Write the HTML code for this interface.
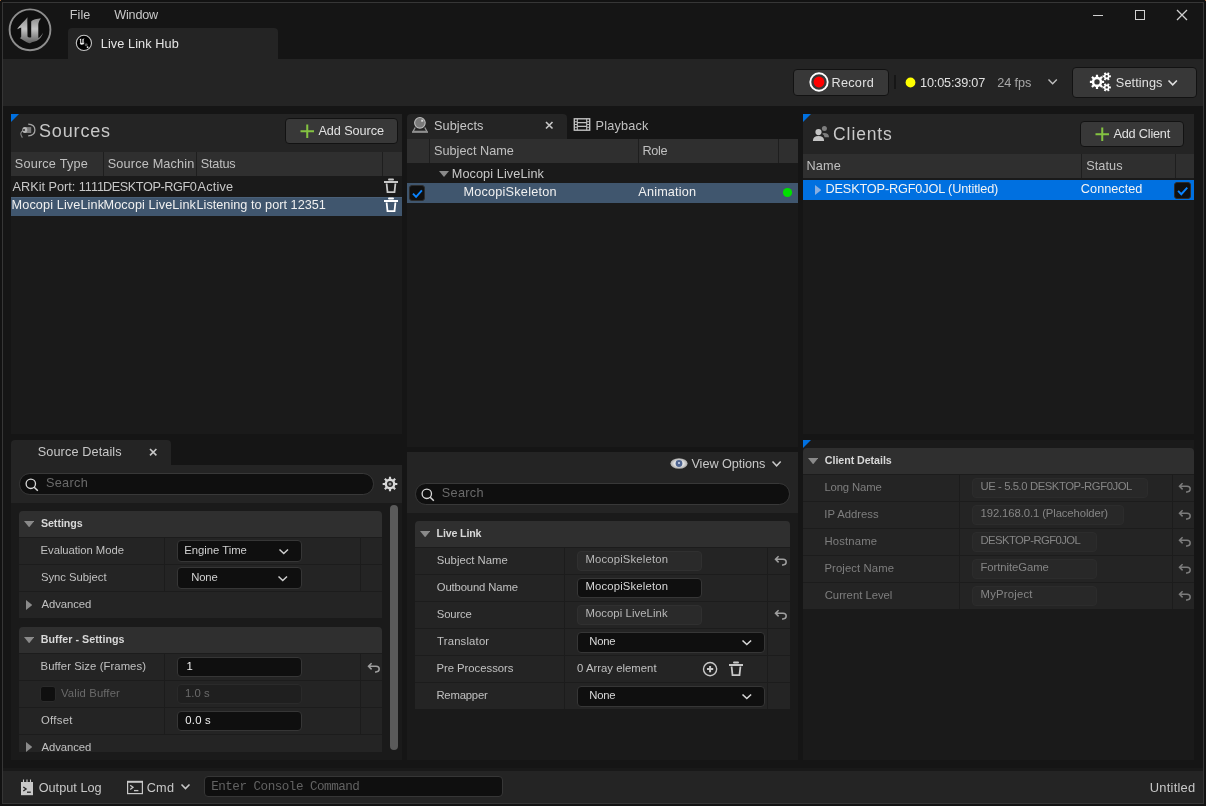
<!DOCTYPE html>
<html><head><meta charset="utf-8"><style>
html,body{margin:0;padding:0;width:1206px;height:806px;overflow:hidden;background:#0c0c0c;}
.a{position:absolute;}
.t{position:absolute;white-space:nowrap;font-family:"Liberation Sans",sans-serif;}
</style></head><body><div class="a" style="left:0;top:0;width:1206px;height:806px;overflow:hidden;will-change:transform;background:#0c0c0c">
<div class="a" style="left:0px;top:0px;width:1206px;height:806px;background:#121212;"></div>
<div class="a" style="left:2px;top:2px;width:1202px;height:802px;background:#363636;"></div>
<div class="a" style="left:0px;top:0px;width:1px;height:1px;background:#a0683c;"></div>
<div class="a" style="left:1205px;top:0px;width:1px;height:1px;background:#a0683c;"></div>
<div class="a" style="left:3px;top:3px;width:1200px;height:800px;background:#151515;"></div>
<svg class="a" style="left:8px;top:8.2px;" width="44" height="44" viewBox="0 0 44 44"><defs><linearGradient id="lg" x1="0" y1="0" x2="0" y2="1"><stop offset="0" stop-color="#8a8a8a"/><stop offset="0.45" stop-color="#c4c4c4"/><stop offset="1" stop-color="#5e5e5e"/></linearGradient></defs><circle cx="22" cy="21.8" r="20.4" fill="#0f0f0f" stroke="#8e8e8e" stroke-width="1.9"/><path d="M9.2 21.3 C11 18 15 14.5 19.5 9.2 L19.3 12.5 L19.5 28.5 Q20.5 30 23.2 29.2 L23.2 13.5 C24.5 11.5 29 10.5 33.1 10.5 C31 12.5 30.3 15 30.3 17 L30.3 30 C31.5 29.5 33.5 27.5 35 24.7 C33.5 29.5 30.5 33 25.7 33.7 L24.5 34 C23 35 22 35.3 21.3 35.3 C18 34 14 31.5 11.7 30 C13 29.8 13.2 29 13.2 28 L13.2 19.5 C12 20 10.5 20.5 9.2 21.3 Z" fill="url(#lg)"/></svg>
<div class="t" style="left:69.79px;top:9.13px;font-size:12.6px;line-height:12.6px;color:#c8c8c8;font-family:'Liberation Sans',sans-serif;letter-spacing:0.075px;">File</div>
<div class="t" style="left:114.34px;top:9.13px;font-size:12.6px;line-height:12.6px;color:#c8c8c8;font-family:'Liberation Sans',sans-serif;letter-spacing:-0.199px;">Window</div>
<div class="a" style="left:68px;top:28px;width:210px;height:31px;background:#242424;border-radius:4px 4px 0 0;"></div>
<svg class="a" style="left:75px;top:34px;" width="18" height="18" viewBox="0 0 18 18"><circle cx="8.9" cy="8.9" r="7.6" fill="#000" stroke="#c4c4c4" stroke-width="1.1"/><path d="M4.5 5.2 L6.2 4.6 L6.2 8.6 Q6.6 9.2 7.4 8.9 L7.4 5 L9.6 4.4 L8.6 5.6 L8.6 9.2 L9.8 8.4 Q9 10.6 6.6 10.8 Q5.2 10.4 4.6 9.8 L5.2 9.4 L5.2 6.2 Z" fill="#f0f0f0"/><circle cx="11.2" cy="10.8" r="1.5" fill="#555"/><circle cx="12.6" cy="13.2" r="0.9" fill="#e0e0e0"/></svg>
<div class="t" style="left:100.78px;top:38.15px;font-size:12.7px;line-height:12.7px;color:#e6e6e6;font-family:'Liberation Sans',sans-serif;letter-spacing:0.089px;">Live Link Hub</div>
<div class="a" style="left:1093px;top:15px;width:10px;height:1.4px;background:#d0d0d0;"></div>
<div class="a" style="left:1135px;top:10px;width:10px;height:10px;border:1.4px solid #d0d0d0;box-sizing:border-box;"></div>
<svg class="a" style="left:1176px;top:8.5px;" width="12" height="12" viewBox="0 0 12 12"><path d="M1 1 L11 11 M11 1 L1 11" stroke="#d0d0d0" stroke-width="1.3"/></svg>
<div class="a" style="left:3px;top:59px;width:1200px;height:47px;background:#242424;"></div>
<div class="a" style="left:793px;top:69px;width:96px;height:27px;background:#383838;border:1px solid #121212;box-sizing:border-box;border-radius:4px;"></div>
<svg class="a" style="left:808px;top:71px;" width="22" height="22" viewBox="0 0 22 22"><circle cx="11" cy="11" r="8.7" fill="none" stroke="#fff" stroke-width="1.9"/><circle cx="11" cy="11" r="5.4" fill="#ff0000"/></svg>
<div class="t" style="left:831.48px;top:76.75px;font-size:12.7px;line-height:12.7px;color:#e0e0e0;font-family:'Liberation Sans',sans-serif;letter-spacing:0.264px;">Record</div>
<div class="a" style="left:894px;top:75px;width:2px;height:14px;background:#161616;"></div>
<svg class="a" style="left:904px;top:76px;" width="13" height="13" viewBox="0 0 13 13"><circle cx="6.5" cy="6.5" r="4.9" fill="#ffff00"/></svg>
<div class="t" style="left:920.05px;top:76.75px;font-size:12.7px;line-height:12.7px;color:#e0e0e0;font-family:'Liberation Sans',sans-serif;letter-spacing:-0.177px;">10:05:39:07</div>
<div class="t" style="left:997.16px;top:76.75px;font-size:12.7px;line-height:12.7px;color:#a8a8a8;font-family:'Liberation Sans',sans-serif;letter-spacing:-0.066px;">24 fps</div>
<svg class="a" style="left:1046.5px;top:77.9px;" width="11.3" height="7.3" viewBox="0 0 11.3 7.3"><path d="M1.5 1.5 L5.65 5.80 L9.80 1.5" fill="none" stroke="#c0c0c0" stroke-width="1.4"/></svg>
<div class="a" style="left:1072px;top:67px;width:125px;height:31px;background:#383838;border:1px solid #121212;box-sizing:border-box;border-radius:4px;"></div>
<svg class="a" style="left:1085px;top:68px;" width="30" height="28" viewBox="0 0 30 28"><path fill-rule="evenodd" fill="#fff" d="M16.80 11.91 L17.08 12.79 L19.12 12.80 L19.12 15.00 L17.08 15.01 L16.80 15.89 L16.38 16.70 L17.81 18.15 L16.25 19.71 L14.80 18.28 L13.99 18.70 L13.11 18.98 L13.10 21.02 L10.90 21.02 L10.89 18.98 L10.01 18.70 L9.20 18.28 L7.75 19.71 L6.19 18.15 L7.62 16.70 L7.20 15.89 L6.92 15.01 L4.88 15.00 L4.88 12.80 L6.92 12.79 L7.20 11.91 L7.62 11.10 L6.19 9.65 L7.75 8.09 L9.20 9.52 L10.01 9.10 L10.89 8.82 L10.90 6.78 L13.10 6.78 L13.11 8.82 L13.99 9.10 L14.80 9.52 L16.25 8.09 L17.81 9.65 L16.38 11.10 Z M9.30 13.90 a2.70 2.70 0 1 0 5.40 0 a2.70 2.70 0 1 0 -5.40 0 Z M24.21 6.85 L24.46 7.40 L25.89 7.32 L25.89 9.28 L24.46 9.20 L24.21 9.75 L23.86 10.24 L24.64 11.43 L22.94 12.42 L22.30 11.14 L21.70 11.20 L21.10 11.14 L20.46 12.42 L18.76 11.43 L19.54 10.24 L19.19 9.75 L18.94 9.20 L17.51 9.28 L17.51 7.32 L18.94 7.40 L19.19 6.85 L19.54 6.36 L18.76 5.17 L20.46 4.18 L21.10 5.46 L21.70 5.40 L22.30 5.46 L22.94 4.18 L24.64 5.17 L23.86 6.36 Z M20.50 8.30 a1.20 1.20 0 1 0 2.40 0 a1.20 1.20 0 1 0 -2.40 0 Z M24.21 17.95 L24.46 18.50 L25.89 18.42 L25.89 20.38 L24.46 20.30 L24.21 20.85 L23.86 21.34 L24.64 22.53 L22.94 23.52 L22.30 22.24 L21.70 22.30 L21.10 22.24 L20.46 23.52 L18.76 22.53 L19.54 21.34 L19.19 20.85 L18.94 20.30 L17.51 20.38 L17.51 18.42 L18.94 18.50 L19.19 17.95 L19.54 17.46 L18.76 16.27 L20.46 15.28 L21.10 16.56 L21.70 16.50 L22.30 16.56 L22.94 15.28 L24.64 16.27 L23.86 17.46 Z M20.50 19.40 a1.20 1.20 0 1 0 2.40 0 a1.20 1.20 0 1 0 -2.40 0 Z"/></svg>
<div class="t" style="left:1115.83px;top:76.95px;font-size:12.7px;line-height:12.7px;color:#e0e0e0;font-family:'Liberation Sans',sans-serif;letter-spacing:0.101px;">Settings</div>
<svg class="a" style="left:1167.3px;top:79px;" width="11.4" height="7.3" viewBox="0 0 11.4 7.3"><path d="M1.5 1.5 L5.70 5.80 L9.90 1.5" fill="none" stroke="#e0e0e0" stroke-width="1.6"/></svg>
<div class="a" style="left:11px;top:114px;width:391px;height:38px;background:#242424;"></div>
<svg class="a" style="left:11px;top:114px;" width="8" height="8" viewBox="0 0 8 8"><path d="M0 0 H8 L0 8 Z" fill="#0070e0"/></svg>
<svg class="a" style="left:18px;top:122px;" width="19" height="18" viewBox="0 0 19 18"><path d="M5.6 8.6 Q0.6 10.4 4.4 15.6" fill="none" stroke="#8a8a8a" stroke-width="1.1"/><rect x="6.6" y="5.1" width="6.6" height="5.9" fill="#7c7c7c"/><ellipse cx="6.8" cy="8" rx="2.5" ry="2.95" fill="#b4b4b4"/><path d="M10.2 2.2 Q16.9 2.6 16.9 8 Q16.9 13.4 10.2 13.8" fill="none" stroke="#a4a4a4" stroke-width="1.3"/><circle cx="6" cy="8" r="0.95" fill="#202020"/></svg>
<div class="t" style="left:38.99px;top:122.06px;font-size:18px;line-height:18px;color:#c8c8c8;font-family:'Liberation Sans',sans-serif;letter-spacing:0.847px;">Sources</div>
<div class="a" style="left:285px;top:118px;width:113px;height:26px;background:#383838;border:1px solid #121212;box-sizing:border-box;border-radius:4px;"></div>
<svg class="a" style="left:300px;top:124px;" width="14.5" height="14.5" viewBox="0 0 14.5 14.5"><path d="M7.25 0.5 V14.00 M0.5 7.25 H14.00" stroke="#84c341" stroke-width="2"/></svg>
<div class="t" style="left:318.40px;top:124.95px;font-size:12.7px;line-height:12.7px;color:#e0e0e0;font-family:'Liberation Sans',sans-serif;letter-spacing:-0.072px;">Add Source</div>
<div class="a" style="left:11px;top:152px;width:391px;height:24px;background:#2f2f2f;"></div>
<div class="a" style="left:103px;top:152px;width:1px;height:24px;background:#1e1e1e;"></div>
<div class="a" style="left:196px;top:152px;width:1px;height:24px;background:#1e1e1e;"></div>
<div class="a" style="left:382px;top:152px;width:1px;height:24px;background:#1e1e1e;"></div>
<div class="t" style="left:14.73px;top:157.75px;font-size:12.7px;line-height:12.7px;color:#c0c0c0;font-family:'Liberation Sans',sans-serif;letter-spacing:0.202px;">Source Type</div>
<div class="t" style="left:107.73px;top:157.75px;font-size:12.7px;line-height:12.7px;color:#c0c0c0;font-family:'Liberation Sans',sans-serif;letter-spacing:0.169px;">Source Machin</div>
<div class="t" style="left:200.73px;top:157.75px;font-size:12.7px;line-height:12.7px;color:#c0c0c0;font-family:'Liberation Sans',sans-serif;letter-spacing:-0.198px;">Status</div>
<div class="a" style="left:11px;top:176px;width:391px;height:258px;background:#1a1a1a;"></div>
<div class="t" style="left:12.60px;top:181.05px;font-size:12.7px;line-height:12.7px;color:#c8c8c8;font-family:'Liberation Sans',sans-serif;letter-spacing:-0.012px;">ARKit Port: 1111</div>
<div class="t" style="left:102.98px;top:181.05px;font-size:12.7px;line-height:12.7px;color:#c8c8c8;font-family:'Liberation Sans',sans-serif;letter-spacing:-0.417px;">DESKTOP-RGF0</div>
<div class="t" style="left:197.50px;top:181.05px;font-size:12.7px;line-height:12.7px;color:#c8c8c8;font-family:'Liberation Sans',sans-serif;letter-spacing:0.193px;">Active</div>
<svg class="a" style="left:384px;top:178px;" width="15" height="16" viewBox="0 0 15 16"><rect x="4" y="0.4" width="6" height="2.1" rx="1" fill="#c8c8c8"/><rect x="0" y="3" width="14" height="2" fill="#c8c8c8"/><path d="M2.6 5.5 L3.5 14.1 H10.5 L11.4 5.5" fill="none" stroke="#c8c8c8" stroke-width="1.8"/></svg>
<div class="a" style="left:11px;top:197px;width:391px;height:19px;background:#40566e;"></div>
<div class="a" style="left:11px;top:197px;width:391px;height:1px;background:#4a6078;"></div>
<div class="t" style="left:11.58px;top:199.45px;font-size:12.7px;line-height:12.7px;color:#f0f0f0;font-family:'Liberation Sans',sans-serif;letter-spacing:0.104px;">Mocopi LiveLink</div>
<div class="t" style="left:103.48px;top:199.45px;font-size:12.7px;line-height:12.7px;color:#f0f0f0;font-family:'Liberation Sans',sans-serif;letter-spacing:0.104px;">Mocopi LiveLink</div>
<div class="t" style="left:196.48px;top:199.45px;font-size:12.7px;line-height:12.7px;color:#f0f0f0;font-family:'Liberation Sans',sans-serif;letter-spacing:0.017px;">Listening to port 12351</div>
<svg class="a" style="left:384px;top:197px;" width="15" height="16" viewBox="0 0 15 16"><rect x="4" y="0.4" width="6" height="2.1" rx="1" fill="#ffffff"/><rect x="0" y="3" width="14" height="2" fill="#ffffff"/><path d="M2.6 5.5 L3.5 14.1 H10.5 L11.4 5.5" fill="none" stroke="#ffffff" stroke-width="1.8"/></svg>
<div class="a" style="left:407px;top:114px;width:160px;height:25px;background:#242424;border-radius:4px 4px 0 0;"></div>
<svg class="a" style="left:410px;top:116px;" width="20" height="18" viewBox="0 0 20 18"><circle cx="9.9" cy="6.8" r="5.3" fill="#7a7a7a" stroke="#bcbcbc" stroke-width="1.1"/><rect x="11.2" y="3.7" width="2" height="2" fill="#d8d8d8"/><path d="M5.2 11.5 L3 15.5 H17 L14.8 11.5" fill="none" stroke="#9a9a9a" stroke-width="1.3"/><rect x="2" y="15.3" width="16" height="1.6" fill="#8a8a8a"/></svg>
<div class="t" style="left:433.93px;top:119.65px;font-size:12.7px;line-height:12.7px;color:#c8c8c8;font-family:'Liberation Sans',sans-serif;letter-spacing:0.116px;">Subjects</div>
<svg class="a" style="left:545px;top:121.3px;" width="8.5" height="8.5" viewBox="0 0 8.5 8.5"><path d="M1 1 L7.5 7.5 M7.5 1 L1 7.5" stroke="#c8c8c8" stroke-width="1.6"/></svg>
<svg class="a" style="left:573px;top:118px;" width="18" height="13" viewBox="0 0 18 13"><rect x="1.3" y="0.8" width="15.4" height="11.4" fill="none" stroke="#c0c0c0" stroke-width="1.4"/><path d="M4.3 0.8 V12.2 M13.7 0.8 V12.2 M4.3 4.6 H13.7 M4.3 8.4 H13.7 M1.3 3.7 H4.3 M1.3 6.5 H4.3 M1.3 9.3 H4.3 M13.7 3.7 H16.7 M13.7 6.5 H16.7 M13.7 9.3 H16.7" stroke="#c0c0c0" stroke-width="1.1"/></svg>
<div class="t" style="left:595.48px;top:119.65px;font-size:12.7px;line-height:12.7px;color:#c0c0c0;font-family:'Liberation Sans',sans-serif;letter-spacing:0.208px;">Playback</div>
<div class="a" style="left:407px;top:139px;width:391px;height:24px;background:#2f2f2f;"></div>
<div class="a" style="left:429px;top:139px;width:1px;height:24px;background:#1e1e1e;"></div>
<div class="a" style="left:638px;top:139px;width:1px;height:24px;background:#1e1e1e;"></div>
<div class="a" style="left:778px;top:139px;width:1px;height:24px;background:#1e1e1e;"></div>
<div class="t" style="left:433.93px;top:144.55px;font-size:12.7px;line-height:12.7px;color:#c0c0c0;font-family:'Liberation Sans',sans-serif;letter-spacing:0.029px;">Subject Name</div>
<div class="t" style="left:642.38px;top:144.75px;font-size:12.7px;line-height:12.7px;color:#c0c0c0;font-family:'Liberation Sans',sans-serif;letter-spacing:-0.292px;">Role</div>
<div class="a" style="left:407px;top:163px;width:391px;height:284px;background:#1a1a1a;"></div>
<svg class="a" style="left:439px;top:171px;" width="10" height="6" viewBox="0 0 10 6"><path d="M0 0 H10 L5.0 6 Z" fill="#8a8a8a"/></svg>
<div class="t" style="left:451.78px;top:167.75px;font-size:12.7px;line-height:12.7px;color:#c8c8c8;font-family:'Liberation Sans',sans-serif;letter-spacing:0.083px;">Mocopi LiveLink</div>
<div class="a" style="left:407px;top:183px;width:391px;height:20px;background:#40566e;"></div>
<div class="a" style="left:408.5px;top:184.5px;width:16.5px;height:16.5px;background:#0f0f0f;border:1px solid #2c2c2c;box-sizing:border-box;border-radius:3px;"></div>
<svg class="a" style="left:408.5px;top:184.5px;" width="16.5" height="16.5" viewBox="0 0 16.5 16.5"><path d="M3.96 8.58 L7.09 11.88 L12.87 5.45" fill="none" stroke="#0a84ff" stroke-width="1.9"/></svg>
<div class="t" style="left:463.38px;top:185.95px;font-size:12.7px;line-height:12.7px;color:#f0f0f0;font-family:'Liberation Sans',sans-serif;letter-spacing:0.224px;">MocopiSkeleton</div>
<div class="t" style="left:638.30px;top:185.95px;font-size:12.7px;line-height:12.7px;color:#f0f0f0;font-family:'Liberation Sans',sans-serif;letter-spacing:0.164px;">Animation</div>
<svg class="a" style="left:782px;top:187px;" width="11" height="11" viewBox="0 0 11 11"><circle cx="5.5" cy="5.5" r="4.6" fill="#00e000"/></svg>
<div class="a" style="left:803px;top:114px;width:391px;height:40px;background:#242424;"></div>
<svg class="a" style="left:803px;top:114px;" width="8" height="8" viewBox="0 0 8 8"><path d="M0 0 H8 L0 8 Z" fill="#0070e0"/></svg>
<svg class="a" style="left:812px;top:125px;" width="18" height="17" viewBox="0 0 18 17"><circle cx="6.5" cy="7.1" r="3.1" fill="#c4c4c4"/><path d="M0.9 16 Q0.9 10.9 6.5 10.9 Q12.1 10.9 12.1 16 Z" fill="#c4c4c4"/><circle cx="12.4" cy="3.4" r="2.5" fill="#7e7e7e"/><path d="M10.6 8.2 Q16.8 7.4 17 12.3 H12.6 Q12.3 9.9 10.4 8.9 Z" fill="#7e7e7e"/></svg>
<div class="t" style="left:833.12px;top:125.98px;font-size:17.5px;line-height:17.5px;color:#c8c8c8;font-family:'Liberation Sans',sans-serif;letter-spacing:0.871px;">Clients</div>
<div class="a" style="left:1080px;top:121px;width:104px;height:26px;background:#383838;border:1px solid #121212;box-sizing:border-box;border-radius:4px;"></div>
<svg class="a" style="left:1095px;top:127px;" width="14.5" height="14.5" viewBox="0 0 14.5 14.5"><path d="M7.25 0.5 V14.00 M0.5 7.25 H14.00" stroke="#84c341" stroke-width="2"/></svg>
<div class="t" style="left:1113.50px;top:127.75px;font-size:12.7px;line-height:12.7px;color:#e0e0e0;font-family:'Liberation Sans',sans-serif;letter-spacing:-0.198px;">Add Client</div>
<div class="a" style="left:803px;top:154px;width:391px;height:24px;background:#2f2f2f;"></div>
<div class="a" style="left:1081px;top:154px;width:1px;height:24px;background:#1e1e1e;"></div>
<div class="a" style="left:1175px;top:154px;width:1px;height:24px;background:#1e1e1e;"></div>
<div class="t" style="left:806.48px;top:159.75px;font-size:12.7px;line-height:12.7px;color:#c0c0c0;font-family:'Liberation Sans',sans-serif;letter-spacing:0.159px;">Name</div>
<div class="t" style="left:1086.23px;top:159.75px;font-size:12.7px;line-height:12.7px;color:#c0c0c0;font-family:'Liberation Sans',sans-serif;letter-spacing:0.062px;">Status</div>
<div class="a" style="left:803px;top:178px;width:391px;height:256px;background:#1a1a1a;"></div>
<div class="a" style="left:803px;top:180px;width:391px;height:20px;background:#0070e0;"></div>
<svg class="a" style="left:815px;top:185px;" width="6.2" height="10" viewBox="0 0 6.2 10"><path d="M0 0 L6.2 5.0 L0 10 Z" fill="#88aee0"/></svg>
<div class="t" style="left:825.48px;top:182.75px;font-size:12.7px;line-height:12.7px;color:#f4f4f4;font-family:'Liberation Sans',sans-serif;letter-spacing:-0.137px;">DESKTOP-RGF0JOL (Untitled)</div>
<div class="t" style="left:1080.87px;top:182.75px;font-size:12.7px;line-height:12.7px;color:#f4f4f4;font-family:'Liberation Sans',sans-serif;letter-spacing:0.024px;">Connected</div>
<div class="a" style="left:1173.5px;top:181.5px;width:17px;height:17px;background:#0f0f0f;border:1px solid #2c2c2c;box-sizing:border-box;border-radius:3px;"></div>
<svg class="a" style="left:1173.5px;top:181.5px;" width="17" height="17" viewBox="0 0 17 17"><path d="M4.08 8.84 L7.31 12.24 L13.26 5.61" fill="none" stroke="#0a84ff" stroke-width="1.9"/></svg>
<div class="a" style="left:11px;top:440px;width:160px;height:25px;background:#242424;border-radius:4px 4px 0 0;"></div>
<div class="t" style="left:37.73px;top:445.75px;font-size:12.7px;line-height:12.7px;color:#c8c8c8;font-family:'Liberation Sans',sans-serif;letter-spacing:0.108px;">Source Details</div>
<svg class="a" style="left:148.8px;top:447.6px;" width="8.4" height="8.4" viewBox="0 0 8.4 8.4"><path d="M1 1 L7.4 7.4 M7.4 1 L1 7.4" stroke="#c8c8c8" stroke-width="1.6"/></svg>
<div class="a" style="left:11px;top:465px;width:391px;height:38px;background:#242424;"></div>
<div class="a" style="left:19px;top:473px;width:355px;height:21.5px;background:#0f0f0f;border:1px solid #383838;box-sizing:border-box;border-radius:10.75px;"></div>
<svg class="a" style="left:25px;top:477.5px;" width="14" height="14" viewBox="0 0 14 14"><circle cx="5.8" cy="5.8" r="4.7" fill="none" stroke="#d8d8d8" stroke-width="1.3"/><path d="M9.2 9.2 L12.8 12.8" stroke="#d8d8d8" stroke-width="1.5"/></svg>
<div class="t" style="left:45.93px;top:476.75px;font-size:12.7px;line-height:12.7px;color:#6a6a6a;font-family:'Liberation Sans',sans-serif;letter-spacing:0.328px;">Search</div>
<svg class="a" style="left:382px;top:476px;" width="16" height="16" viewBox="0 0 16 16"><path fill-rule="evenodd" fill="#d8d8d8" d="M12.99 5.93 L13.29 6.90 L15.33 6.96 L15.33 9.04 L13.29 9.10 L12.99 10.07 L12.51 10.96 L13.92 12.44 L12.44 13.92 L10.96 12.51 L10.07 12.99 L9.10 13.29 L9.04 15.33 L6.96 15.33 L6.90 13.29 L5.93 12.99 L5.04 12.51 L3.56 13.92 L2.08 12.44 L3.49 10.96 L3.01 10.07 L2.71 9.10 L0.67 9.04 L0.67 6.96 L2.71 6.90 L3.01 5.93 L3.49 5.04 L2.08 3.56 L3.56 2.08 L5.04 3.49 L5.93 3.01 L6.90 2.71 L6.96 0.67 L9.04 0.67 L9.10 2.71 L10.07 3.01 L10.96 3.49 L12.44 2.08 L13.92 3.56 L12.51 5.04 Z M5.00 8.00 a3.00 3.00 0 1 0 6.00 0 a3.00 3.00 0 1 0 -6.00 0 Z"/><circle cx="8" cy="8" r="1.5" fill="#9a9a9a"/></svg>
<div class="a" style="left:11px;top:503px;width:391px;height:257px;background:#1a1a1a;"></div>
<div class="a" style="left:19px;top:511px;width:363px;height:26px;background:#2f2f2f;border-radius:4px 4px 0 0;"></div>
<svg class="a" style="left:23.8px;top:521px;" width="10.3" height="6.3" viewBox="0 0 10.3 6.3"><path d="M0 0 H10.3 L5.15 6.3 Z" fill="#8a8a8a"/></svg>
<div class="t" style="left:40.88px;top:518.34px;font-size:10.7px;line-height:10.7px;color:#d8d8d8;font-family:'Liberation Sans',sans-serif;font-weight:bold;letter-spacing:-0.037px;">Settings</div>
<div class="a" style="left:19px;top:537px;width:363px;height:27px;background:#242424;"></div>
<div class="a" style="left:19px;top:537px;width:363px;height:1px;background:#1c1c1c;"></div>
<div class="a" style="left:19px;top:564px;width:363px;height:27px;background:#242424;"></div>
<div class="a" style="left:19px;top:564px;width:363px;height:1px;background:#1c1c1c;"></div>
<div class="a" style="left:19px;top:591px;width:363px;height:27px;background:#242424;"></div>
<div class="a" style="left:19px;top:591px;width:363px;height:1px;background:#1c1c1c;"></div>
<div class="a" style="left:164px;top:538px;width:1px;height:53px;background:#1c1c1c;"></div>
<div class="a" style="left:360px;top:538px;width:1px;height:53px;background:#1c1c1c;"></div>
<div class="t" style="left:40.60px;top:545.13px;font-size:11.3px;line-height:11.3px;color:#c0c0c0;font-family:'Liberation Sans',sans-serif;letter-spacing:-0.059px;">Evaluation Mode</div>
<div class="a" style="left:177px;top:540px;width:124.5px;height:21.5px;background:#0f0f0f;border:1px solid #363636;box-sizing:border-box;border-radius:4px;"></div>
<div class="t" style="left:184.20px;top:544.73px;font-size:11.3px;line-height:11.3px;color:#d0d0d0;font-family:'Liberation Sans',sans-serif;letter-spacing:-0.017px;">Engine Time</div>
<svg class="a" style="left:278.3px;top:547.5px;" width="11.5" height="7" viewBox="0 0 11.5 7"><path d="M1.5 1.5 L5.75 5.50 L10.00 1.5" fill="none" stroke="#d0d0d0" stroke-width="1.5"/></svg>
<div class="t" style="left:40.99px;top:571.73px;font-size:11.3px;line-height:11.3px;color:#c0c0c0;font-family:'Liberation Sans',sans-serif;letter-spacing:-0.034px;">Sync Subject</div>
<div class="a" style="left:177px;top:567px;width:124.5px;height:21.5px;background:#0f0f0f;border:1px solid #363636;box-sizing:border-box;border-radius:4px;"></div>
<div class="t" style="left:191.30px;top:571.73px;font-size:11.3px;line-height:11.3px;color:#d0d0d0;font-family:'Liberation Sans',sans-serif;letter-spacing:-0.184px;">None</div>
<svg class="a" style="left:276.5px;top:574.5px;" width="11.5" height="7" viewBox="0 0 11.5 7"><path d="M1.5 1.5 L5.75 5.50 L10.00 1.5" fill="none" stroke="#d0d0d0" stroke-width="1.5"/></svg>
<svg class="a" style="left:25.9px;top:600px;" width="6.4" height="10" viewBox="0 0 6.4 10"><path d="M0 0 L6.4 5.0 L0 10 Z" fill="#8a8a8a"/></svg>
<div class="t" style="left:41.50px;top:598.93px;font-size:11.3px;line-height:11.3px;color:#c0c0c0;font-family:'Liberation Sans',sans-serif;letter-spacing:-0.079px;">Advanced</div>
<div class="a" style="left:19px;top:627px;width:363px;height:26px;background:#2f2f2f;border-radius:4px 4px 0 0;"></div>
<svg class="a" style="left:23.8px;top:637px;" width="10.3" height="6.3" viewBox="0 0 10.3 6.3"><path d="M0 0 H10.3 L5.15 6.3 Z" fill="#8a8a8a"/></svg>
<div class="t" style="left:40.80px;top:634.04px;font-size:10.7px;line-height:10.7px;color:#d8d8d8;font-family:'Liberation Sans',sans-serif;font-weight:bold;letter-spacing:0.039px;">Buffer - Settings</div>
<div class="a" style="left:19px;top:653px;width:363px;height:27px;background:#242424;"></div>
<div class="a" style="left:19px;top:653px;width:363px;height:1px;background:#1c1c1c;"></div>
<div class="a" style="left:19px;top:680px;width:363px;height:27px;background:#242424;"></div>
<div class="a" style="left:19px;top:680px;width:363px;height:1px;background:#1c1c1c;"></div>
<div class="a" style="left:19px;top:707px;width:363px;height:27px;background:#242424;"></div>
<div class="a" style="left:19px;top:707px;width:363px;height:1px;background:#1c1c1c;"></div>
<div class="a" style="left:19px;top:734px;width:363px;height:18px;background:#242424;"></div>
<div class="a" style="left:19px;top:734px;width:363px;height:1px;background:#1c1c1c;"></div>
<div class="a" style="left:164px;top:654px;width:1px;height:80px;background:#1c1c1c;"></div>
<div class="a" style="left:360px;top:654px;width:1px;height:80px;background:#1c1c1c;"></div>
<div class="t" style="left:40.60px;top:661.13px;font-size:11.3px;line-height:11.3px;color:#c0c0c0;font-family:'Liberation Sans',sans-serif;letter-spacing:0.072px;">Buffer Size (Frames)</div>
<div class="a" style="left:177px;top:657px;width:124.5px;height:20px;background:#0f0f0f;border:1px solid #363636;box-sizing:border-box;border-radius:4px;"></div>
<div class="t" style="left:186.55px;top:661.43px;font-size:11.3px;line-height:11.3px;color:#f0f0f0;font-family:'Liberation Sans',sans-serif;">1</div>
<svg class="a" style="left:367px;top:660.5px;" width="14" height="12" viewBox="0 0 14 12"><path d="M4.6 2.2 L1.5 5.3 L4.6 8.4 M1.8 5.3 H9 Q12.2 5.3 12.2 8.1 Q12.2 10.9 9 10.9 H8" fill="none" stroke="#a0a0a0" stroke-width="1.5"/></svg>
<div class="a" style="left:39.8px;top:685.6px;width:16.6px;height:16.8px;background:#0f0f0f;border:1px solid #2a2a2a;box-sizing:border-box;border-radius:3px;"></div>
<div class="t" style="left:61.04px;top:688.33px;font-size:11.3px;line-height:11.3px;color:#6a6a6a;font-family:'Liberation Sans',sans-serif;letter-spacing:0.129px;">Valid Buffer</div>
<div class="a" style="left:177px;top:684px;width:124.5px;height:19.5px;background:#1f1f1f;border:1px solid #2a2a2a;box-sizing:border-box;border-radius:4px;"></div>
<div class="t" style="left:184.95px;top:688.13px;font-size:11.3px;line-height:11.3px;color:#6a6a6a;font-family:'Liberation Sans',sans-serif;letter-spacing:0.056px;">1.0 s</div>
<div class="t" style="left:40.99px;top:715.13px;font-size:11.3px;line-height:11.3px;color:#c0c0c0;font-family:'Liberation Sans',sans-serif;letter-spacing:0.295px;">Offset</div>
<div class="a" style="left:177px;top:711px;width:124.5px;height:20px;background:#0f0f0f;border:1px solid #363636;box-sizing:border-box;border-radius:4px;"></div>
<div class="t" style="left:185.35px;top:715.33px;font-size:11.3px;line-height:11.3px;color:#f0f0f0;font-family:'Liberation Sans',sans-serif;letter-spacing:0.207px;">0.0 s</div>
<div class="a" style="left:19px;top:734px;width:363px;height:18px;overflow:hidden">
<svg class="a" style="left:6.899999999999999px;top:8.299999999999955px;" width="6.4" height="10" viewBox="0 0 6.4 10"><path d="M0 0 L6.4 5.0 L0 10 Z" fill="#8a8a8a"/></svg>
<div class="t" style="left:22.50px;top:7.53px;font-size:11.3px;line-height:11.3px;color:#c0c0c0;font-family:'Liberation Sans',sans-serif;letter-spacing:-0.079px;">Advanced</div>
</div>
<div class="a" style="left:390px;top:505px;width:8px;height:245px;background:#5a5a5a;border-radius:4px;"></div>
<div class="a" style="left:407px;top:452px;width:391px;height:61px;background:#242424;"></div>
<svg class="a" style="left:669px;top:457px;" width="20" height="13" viewBox="0 0 20 13"><defs><radialGradient id="eg" cx="0.5" cy="0.5" r="0.5"><stop offset="0.5" stop-color="#e8e8e8"/><stop offset="1" stop-color="#a8a8a8"/></radialGradient></defs><ellipse cx="10" cy="6.5" rx="8.6" ry="5.2" fill="url(#eg)"/><circle cx="10" cy="6.5" r="3.4" fill="#4f6591"/><circle cx="10" cy="6" r="1.1" fill="#c8d4ec"/></svg>
<div class="t" style="left:691.44px;top:457.95px;font-size:12.7px;line-height:12.7px;color:#c8c8c8;font-family:'Liberation Sans',sans-serif;letter-spacing:-0.055px;">View Options</div>
<svg class="a" style="left:770.6px;top:459.5px;" width="11.2" height="7.3" viewBox="0 0 11.2 7.3"><path d="M1.5 1.5 L5.60 5.80 L9.70 1.5" fill="none" stroke="#c8c8c8" stroke-width="1.5"/></svg>
<div class="a" style="left:415px;top:483px;width:375px;height:21.5px;background:#0f0f0f;border:1px solid #383838;box-sizing:border-box;border-radius:10.75px;"></div>
<svg class="a" style="left:421px;top:487.5px;" width="14" height="14" viewBox="0 0 14 14"><circle cx="5.8" cy="5.8" r="4.7" fill="none" stroke="#d8d8d8" stroke-width="1.3"/><path d="M9.2 9.2 L12.8 12.8" stroke="#d8d8d8" stroke-width="1.5"/></svg>
<div class="t" style="left:441.73px;top:486.65px;font-size:12.7px;line-height:12.7px;color:#6a6a6a;font-family:'Liberation Sans',sans-serif;letter-spacing:0.328px;">Search</div>
<div class="a" style="left:407px;top:513px;width:391px;height:247px;background:#1a1a1a;"></div>
<div class="a" style="left:415px;top:521px;width:375px;height:26px;background:#2f2f2f;border-radius:4px 4px 0 0;"></div>
<svg class="a" style="left:419.8px;top:531px;" width="10.3" height="6.3" viewBox="0 0 10.3 6.3"><path d="M0 0 H10.3 L5.15 6.3 Z" fill="#8a8a8a"/></svg>
<div class="t" style="left:436.60px;top:528.44px;font-size:10.7px;line-height:10.7px;color:#d8d8d8;font-family:'Liberation Sans',sans-serif;font-weight:bold;letter-spacing:-0.174px;">Live Link</div>
<div class="a" style="left:415px;top:547px;width:375px;height:27px;background:#242424;"></div>
<div class="a" style="left:415px;top:547px;width:375px;height:1px;background:#1c1c1c;"></div>
<div class="a" style="left:415px;top:574px;width:375px;height:27px;background:#242424;"></div>
<div class="a" style="left:415px;top:574px;width:375px;height:1px;background:#1c1c1c;"></div>
<div class="a" style="left:415px;top:601px;width:375px;height:27px;background:#242424;"></div>
<div class="a" style="left:415px;top:601px;width:375px;height:1px;background:#1c1c1c;"></div>
<div class="a" style="left:415px;top:628px;width:375px;height:27px;background:#242424;"></div>
<div class="a" style="left:415px;top:628px;width:375px;height:1px;background:#1c1c1c;"></div>
<div class="a" style="left:415px;top:655px;width:375px;height:27px;background:#242424;"></div>
<div class="a" style="left:415px;top:655px;width:375px;height:1px;background:#1c1c1c;"></div>
<div class="a" style="left:415px;top:682px;width:375px;height:27px;background:#242424;"></div>
<div class="a" style="left:415px;top:682px;width:375px;height:1px;background:#1c1c1c;"></div>
<div class="a" style="left:564px;top:548px;width:1px;height:161px;background:#1c1c1c;"></div>
<div class="a" style="left:767px;top:548px;width:1px;height:161px;background:#1c1c1c;"></div>
<div class="t" style="left:436.79px;top:555.13px;font-size:11.3px;line-height:11.3px;color:#c0c0c0;font-family:'Liberation Sans',sans-serif;letter-spacing:-0.000px;">Subject Name</div>
<div class="t" style="left:436.79px;top:582.13px;font-size:11.3px;line-height:11.3px;color:#c0c0c0;font-family:'Liberation Sans',sans-serif;letter-spacing:-0.144px;">Outbound Name</div>
<div class="t" style="left:436.79px;top:609.13px;font-size:11.3px;line-height:11.3px;color:#c0c0c0;font-family:'Liberation Sans',sans-serif;letter-spacing:-0.161px;">Source</div>
<div class="t" style="left:437.07px;top:636.13px;font-size:11.3px;line-height:11.3px;color:#c0c0c0;font-family:'Liberation Sans',sans-serif;letter-spacing:0.182px;">Translator</div>
<div class="t" style="left:436.40px;top:663.13px;font-size:11.3px;line-height:11.3px;color:#c0c0c0;font-family:'Liberation Sans',sans-serif;letter-spacing:-0.010px;">Pre Processors</div>
<div class="t" style="left:436.40px;top:690.13px;font-size:11.3px;line-height:11.3px;color:#c0c0c0;font-family:'Liberation Sans',sans-serif;letter-spacing:-0.200px;">Remapper</div>
<div class="a" style="left:577px;top:551px;width:125px;height:20px;background:#2a2a2a;border:1px solid #303030;box-sizing:border-box;border-radius:4px;"></div>
<div class="t" style="left:585.40px;top:553.93px;font-size:11.3px;line-height:11.3px;color:#b8b8b8;font-family:'Liberation Sans',sans-serif;letter-spacing:0.168px;">MocopiSkeleton</div>
<svg class="a" style="left:774px;top:554.3px;" width="14" height="12" viewBox="0 0 14 12"><path d="M4.6 2.2 L1.5 5.3 L4.6 8.4 M1.8 5.3 H9 Q12.2 5.3 12.2 8.1 Q12.2 10.9 9 10.9 H8" fill="none" stroke="#a0a0a0" stroke-width="1.5"/></svg>
<div class="a" style="left:577px;top:578px;width:125px;height:20px;background:#0f0f0f;border:1px solid #363636;box-sizing:border-box;border-radius:4px;"></div>
<div class="t" style="left:585.40px;top:580.93px;font-size:11.3px;line-height:11.3px;color:#d8d8d8;font-family:'Liberation Sans',sans-serif;letter-spacing:0.168px;">MocopiSkeleton</div>
<div class="a" style="left:577px;top:605px;width:125px;height:20px;background:#2a2a2a;border:1px solid #303030;box-sizing:border-box;border-radius:4px;"></div>
<div class="t" style="left:585.40px;top:607.93px;font-size:11.3px;line-height:11.3px;color:#b8b8b8;font-family:'Liberation Sans',sans-serif;letter-spacing:0.084px;">Mocopi LiveLink</div>
<svg class="a" style="left:774px;top:608.3px;" width="14" height="12" viewBox="0 0 14 12"><path d="M4.6 2.2 L1.5 5.3 L4.6 8.4 M1.8 5.3 H9 Q12.2 5.3 12.2 8.1 Q12.2 10.9 9 10.9 H8" fill="none" stroke="#a0a0a0" stroke-width="1.5"/></svg>
<div class="a" style="left:577px;top:631.5px;width:187.5px;height:21.0px;background:#0f0f0f;border:1px solid #363636;box-sizing:border-box;border-radius:4px;"></div>
<div class="t" style="left:589.30px;top:635.93px;font-size:11.3px;line-height:11.3px;color:#d8d8d8;font-family:'Liberation Sans',sans-serif;letter-spacing:-0.284px;">None</div>
<svg class="a" style="left:741px;top:638.5px;" width="11.6" height="7" viewBox="0 0 11.6 7"><path d="M1.5 1.5 L5.80 5.50 L10.10 1.5" fill="none" stroke="#d8d8d8" stroke-width="1.6"/></svg>
<div class="t" style="left:577.05px;top:663.13px;font-size:11.3px;line-height:11.3px;color:#c0c0c0;font-family:'Liberation Sans',sans-serif;letter-spacing:0.029px;">0 Array element</div>
<svg class="a" style="left:701.8px;top:660.8px;" width="16.2" height="16.2" viewBox="0 0 16.2 16.2"><circle cx="8.1" cy="8.1" r="6.6" fill="none" stroke="#c8c8c8" stroke-width="1.4"/><path d="M8.1 5.0 V11.2 M5.0 8.1 H11.2" stroke="#c8c8c8" stroke-width="2"/></svg>
<svg class="a" style="left:729px;top:661px;" width="15" height="16" viewBox="0 0 15 16"><rect x="4" y="0.4" width="6" height="2.1" rx="1" fill="#c8c8c8"/><rect x="0" y="3" width="14" height="2" fill="#c8c8c8"/><path d="M2.6 5.5 L3.5 14.1 H10.5 L11.4 5.5" fill="none" stroke="#c8c8c8" stroke-width="1.8"/></svg>
<div class="a" style="left:577px;top:685.5px;width:187.5px;height:21.0px;background:#0f0f0f;border:1px solid #363636;box-sizing:border-box;border-radius:4px;"></div>
<div class="t" style="left:589.30px;top:689.93px;font-size:11.3px;line-height:11.3px;color:#d8d8d8;font-family:'Liberation Sans',sans-serif;letter-spacing:-0.284px;">None</div>
<svg class="a" style="left:741px;top:692.5px;" width="11.6" height="7" viewBox="0 0 11.6 7"><path d="M1.5 1.5 L5.80 5.50 L10.10 1.5" fill="none" stroke="#d8d8d8" stroke-width="1.6"/></svg>
<div class="a" style="left:803px;top:440px;width:391px;height:320px;background:#1a1a1a;"></div>
<svg class="a" style="left:803px;top:440px;" width="8" height="8" viewBox="0 0 8 8"><path d="M0 0 H8 L0 8 Z" fill="#0070e0"/></svg>
<div class="a" style="left:803px;top:448px;width:391px;height:26px;background:#2f2f2f;border-radius:4px 4px 0 0;"></div>
<svg class="a" style="left:807.8px;top:458px;" width="10.3" height="6.3" viewBox="0 0 10.3 6.3"><path d="M0 0 H10.3 L5.15 6.3 Z" fill="#8a8a8a"/></svg>
<div class="t" style="left:824.87px;top:455.24px;font-size:10.7px;line-height:10.7px;color:#d8d8d8;font-family:'Liberation Sans',sans-serif;font-weight:bold;letter-spacing:-0.064px;">Client Details</div>
<div class="a" style="left:803px;top:474px;width:391px;height:27px;background:#242424;"></div>
<div class="a" style="left:803px;top:474px;width:391px;height:1px;background:#1c1c1c;"></div>
<div class="t" style="left:824.40px;top:481.73px;font-size:11.3px;line-height:11.3px;color:#7e7e7e;font-family:'Liberation Sans',sans-serif;letter-spacing:-0.133px;">Long Name</div>
<div class="a" style="left:972px;top:478px;width:176px;height:19.80000000000001px;background:#282828;border:1px solid #2c2c2c;box-sizing:border-box;border-radius:4px;"></div>
<div class="t" style="left:980.55px;top:480.83px;font-size:11.3px;line-height:11.3px;color:#858585;font-family:'Liberation Sans',sans-serif;letter-spacing:-0.422px;">UE - 5.5.0 DESKTOP-RGF0JOL</div>
<svg class="a" style="left:1178px;top:480.9px;" width="14" height="12" viewBox="0 0 14 12"><path d="M4.6 2.2 L1.5 5.3 L4.6 8.4 M1.8 5.3 H9 Q12.2 5.3 12.2 8.1 Q12.2 10.9 9 10.9 H8" fill="none" stroke="#7c7c7c" stroke-width="1.5"/></svg>
<div class="a" style="left:803px;top:501px;width:391px;height:27px;background:#242424;"></div>
<div class="a" style="left:803px;top:501px;width:391px;height:1px;background:#1c1c1c;"></div>
<div class="t" style="left:824.28px;top:508.73px;font-size:11.3px;line-height:11.3px;color:#7e7e7e;font-family:'Liberation Sans',sans-serif;letter-spacing:-0.006px;">IP Address</div>
<div class="a" style="left:972px;top:505px;width:152px;height:19.799999999999955px;background:#282828;border:1px solid #2c2c2c;box-sizing:border-box;border-radius:4px;"></div>
<div class="t" style="left:980.55px;top:507.83px;font-size:11.3px;line-height:11.3px;color:#858585;font-family:'Liberation Sans',sans-serif;letter-spacing:-0.103px;">192.168.0.1 (Placeholder)</div>
<svg class="a" style="left:1178px;top:507.9px;" width="14" height="12" viewBox="0 0 14 12"><path d="M4.6 2.2 L1.5 5.3 L4.6 8.4 M1.8 5.3 H9 Q12.2 5.3 12.2 8.1 Q12.2 10.9 9 10.9 H8" fill="none" stroke="#7c7c7c" stroke-width="1.5"/></svg>
<div class="a" style="left:803px;top:528px;width:391px;height:27px;background:#242424;"></div>
<div class="a" style="left:803px;top:528px;width:391px;height:1px;background:#1c1c1c;"></div>
<div class="t" style="left:824.40px;top:535.73px;font-size:11.3px;line-height:11.3px;color:#7e7e7e;font-family:'Liberation Sans',sans-serif;letter-spacing:0.169px;">Hostname</div>
<div class="a" style="left:972px;top:532px;width:125px;height:19.799999999999955px;background:#282828;border:1px solid #2c2c2c;box-sizing:border-box;border-radius:4px;"></div>
<div class="t" style="left:980.50px;top:534.83px;font-size:11.3px;line-height:11.3px;color:#858585;font-family:'Liberation Sans',sans-serif;letter-spacing:-0.577px;">DESKTOP-RGF0JOL</div>
<svg class="a" style="left:1178px;top:534.9px;" width="14" height="12" viewBox="0 0 14 12"><path d="M4.6 2.2 L1.5 5.3 L4.6 8.4 M1.8 5.3 H9 Q12.2 5.3 12.2 8.1 Q12.2 10.9 9 10.9 H8" fill="none" stroke="#7c7c7c" stroke-width="1.5"/></svg>
<div class="a" style="left:803px;top:555px;width:391px;height:27px;background:#242424;"></div>
<div class="a" style="left:803px;top:555px;width:391px;height:1px;background:#1c1c1c;"></div>
<div class="t" style="left:824.40px;top:562.73px;font-size:11.3px;line-height:11.3px;color:#7e7e7e;font-family:'Liberation Sans',sans-serif;letter-spacing:0.112px;">Project Name</div>
<div class="a" style="left:972px;top:559px;width:125px;height:19.799999999999955px;background:#282828;border:1px solid #2c2c2c;box-sizing:border-box;border-radius:4px;"></div>
<div class="t" style="left:980.50px;top:561.83px;font-size:11.3px;line-height:11.3px;color:#858585;font-family:'Liberation Sans',sans-serif;letter-spacing:-0.072px;">FortniteGame</div>
<svg class="a" style="left:1178px;top:561.9px;" width="14" height="12" viewBox="0 0 14 12"><path d="M4.6 2.2 L1.5 5.3 L4.6 8.4 M1.8 5.3 H9 Q12.2 5.3 12.2 8.1 Q12.2 10.9 9 10.9 H8" fill="none" stroke="#7c7c7c" stroke-width="1.5"/></svg>
<div class="a" style="left:803px;top:582px;width:391px;height:27px;background:#242424;"></div>
<div class="a" style="left:803px;top:582px;width:391px;height:1px;background:#1c1c1c;"></div>
<div class="t" style="left:824.73px;top:589.73px;font-size:11.3px;line-height:11.3px;color:#7e7e7e;font-family:'Liberation Sans',sans-serif;letter-spacing:-0.017px;">Current Level</div>
<div class="a" style="left:972px;top:586px;width:125px;height:19.799999999999955px;background:#282828;border:1px solid #2c2c2c;box-sizing:border-box;border-radius:4px;"></div>
<div class="t" style="left:980.50px;top:588.83px;font-size:11.3px;line-height:11.3px;color:#858585;font-family:'Liberation Sans',sans-serif;letter-spacing:0.216px;">MyProject</div>
<svg class="a" style="left:1178px;top:588.9px;" width="14" height="12" viewBox="0 0 14 12"><path d="M4.6 2.2 L1.5 5.3 L4.6 8.4 M1.8 5.3 H9 Q12.2 5.3 12.2 8.1 Q12.2 10.9 9 10.9 H8" fill="none" stroke="#7c7c7c" stroke-width="1.5"/></svg>
<div class="a" style="left:959px;top:475px;width:1px;height:134px;background:#1c1c1c;"></div>
<div class="a" style="left:1172px;top:475px;width:1px;height:134px;background:#1c1c1c;"></div>
<div class="a" style="left:3px;top:768px;width:1200px;height:3px;background:#191919;"></div>
<div class="a" style="left:3px;top:771px;width:1200px;height:32px;background:#242424;"></div>
<svg class="a" style="left:20px;top:779px;" width="14" height="17" viewBox="0 0 14 17"><path d="M1 3 H13 V16.2 H1 Z" fill="#c8c8c8"/><path d="M3.5 0.5 V3 M7 0.5 V3 M10.5 0.5 V3" stroke="#c8c8c8" stroke-width="1.1"/><path d="M3.3 8 L6.1 10 L3.3 12" fill="none" stroke="#242424" stroke-width="1.3"/><path d="M7 13.2 H10.8" stroke="#242424" stroke-width="1.3"/></svg>
<div class="t" style="left:38.63px;top:781.85px;font-size:12.7px;line-height:12.7px;color:#c8c8c8;font-family:'Liberation Sans',sans-serif;letter-spacing:0.026px;">Output Log</div>
<svg class="a" style="left:126px;top:780px;" width="18" height="15" viewBox="0 0 18 15"><rect x="1.6" y="1.4" width="14.8" height="12.2" fill="none" stroke="#c8c8c8" stroke-width="1.2"/><rect x="1.6" y="1" width="14.8" height="1.8" fill="#c8c8c8"/><path d="M4.2 5.2 L7 7.3 L4.2 9.4" fill="none" stroke="#c8c8c8" stroke-width="1.3"/><path d="M8 10.6 H12.4" stroke="#c8c8c8" stroke-width="1.3"/></svg>
<div class="t" style="left:146.67px;top:781.85px;font-size:12.7px;line-height:12.7px;color:#c8c8c8;font-family:'Liberation Sans',sans-serif;letter-spacing:0.250px;">Cmd</div>
<svg class="a" style="left:179.7px;top:783.3px;" width="11" height="7" viewBox="0 0 11 7"><path d="M1.5 1.5 L5.50 5.50 L9.50 1.5" fill="none" stroke="#c8c8c8" stroke-width="1.6"/></svg>
<div class="a" style="left:203.5px;top:776px;width:299.5px;height:21px;background:#0f0f0f;border:1px solid #363636;box-sizing:border-box;border-radius:4px;"></div>
<div class="t" style="left:211.19px;top:780.65px;font-size:12.6px;line-height:12.6px;color:#626262;font-family:'Liberation Mono',monospace;letter-spacing:-0.499px;">Enter Console Command</div>
<div class="t" style="left:1149.83px;top:781.68px;font-size:12.9px;line-height:12.9px;color:#c8c8c8;font-family:'Liberation Sans',sans-serif;letter-spacing:0.230px;">Untitled</div>
</div></body></html>
